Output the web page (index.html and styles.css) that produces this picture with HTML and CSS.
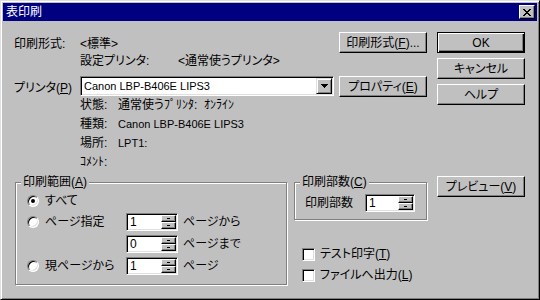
FILE: index.html
```html
<!DOCTYPE html>
<html lang="ja">
<head>
<meta charset="utf-8">
<title>表印刷</title>
<link rel="stylesheet" href="styles.css">
</head>
<body>
<div class="window">
  <div class="titlebar">
    <span class="title">表印刷</span>
    <span class="close">
      <svg width="8" height="7" viewBox="0 0 8 7" shape-rendering="crispEdges">
        <path fill="#000" d="M0 0h2v1H0zM6 0h2v1H6zM1 1h2v1H1zM5 1h2v1H5zM2 2h4v1H2zM3 3h2v1H3zM2 4h4v1H2zM1 5h2v1H1zM5 5h2v1H5zM0 6h2v1H0zM6 6h2v1H6z"/>
      </svg>
    </span>
  </div>
  <div class="client">
    <div class="main">
      <div class="top">
        <div class="lbl">印刷形式:</div>
        <div class="val">&lt;標準&gt;</div>
        <button class="btn">印刷形式(<u>F</u>)...</button>

        <div></div>
        <div class="setrow"><span class="setlbl">設定プリンタ:</span><span>&lt;通常使うプリンタ&gt;</span></div>

        <div class="lbl">プリンタ(<u>P</u>)</div>
        <div class="combo">
          <span class="combotext en">Canon LBP-B406E LIPS3</span>
          <span class="arrow">
            <svg width="7" height="4" viewBox="0 0 7 4" shape-rendering="crispEdges"><path fill="#000" d="M0 0h7v1H0zM1 1h5v1H1zM2 2h3v1H2zM3 3h1v1H3z"/></svg>
          </span>
        </div>
        <button class="btn">プロパティ(<u>E</u>)</button>
      </div>

      <div class="info">
        <div>状態:</div><div>通常使うﾌﾟﾘﾝﾀ:&nbsp; ｵﾝﾗｲﾝ</div>
        <div>種類:</div><div class="en">Canon LBP-B406E LIPS3</div>
        <div>場所:</div><div class="en">LPT1:</div>
        <div>ｺﾒﾝﾄ:</div><div></div>
      </div>

      <div class="bottom">
        <div class="group g1">
          <span class="legend">印刷範囲(<u>A</u>)</span>
          <div class="range">
            <div class="opt"><span class="radio on"></span>すべて</div>
            <div></div><div></div>

            <div class="opt"><span class="radio"></span>ページ指定</div>
            <div class="spin"><span class="num">1</span><span class="ud"><span class="up"><i></i></span><span class="dn"><i></i></span></span></div>
            <div class="after">ページから</div>

            <div></div>
            <div class="spin"><span class="num">0</span><span class="ud"><span class="up"><i></i></span><span class="dn"><i></i></span></span></div>
            <div class="after">ページまで</div>

            <div class="opt"><span class="radio"></span>現ページから</div>
            <div class="spin"><span class="num">1</span><span class="ud"><span class="up"><i></i></span><span class="dn"><i></i></span></span></div>
            <div class="after">ページ</div>
          </div>
        </div>

        <div class="g2col">
          <div class="group g2">
            <span class="legend">印刷部数(<u>C</u>)</span>
            <span class="copylbl">印刷部数</span>
            <div class="spin w50"><span class="num">1</span><span class="ud"><span class="up"><i></i></span><span class="dn"><i></i></span></span></div>
          </div>
          <div class="checks">
            <div class="check"><span class="box"></span>テスト印字(<u>T</u>)</div>
            <div class="check"><span class="box"></span>ファイルへ出力(<u>L</u>)</div>
          </div>
        </div>
      </div>
    </div>

    <div class="side">
      <button class="btn default">OK</button>
      <button class="btn">キャンセル</button>
      <button class="btn">ヘルプ</button>
      <button class="btn preview">プレビュー(<u>V</u>)</button>
    </div>
  </div>
</div>
</body>
</html>
```

FILE: styles.css
```css
* { box-sizing: border-box; }
html, body { margin: 0; padding: 0; }
body {
  width: 540px;
  height: 300px;
  overflow: hidden;
  background: #c0c0c0;
  color: #000;
  font-family: "Liberation Sans", "Noto Sans CJK JP", sans-serif;
  font-size: 12px;
  font-feature-settings: "palt" 1;
  white-space: nowrap;
}
u { text-underline-offset: 1px; }
.en { font-size: 11px; }

.window {
  width: 540px;
  height: 300px;
  background: #c0c0c0;
  border: 1px solid;
  border-color: #dfdfdf #000 #000 #dfdfdf;
  box-shadow: inset 1px 1px #fff, inset -1px -1px #808080;
  padding: 2px;
  display: flex;
  flex-direction: column;
}

.titlebar {
  height: 18px;
  background: #000080;
  color: #fff;
  display: flex;
  align-items: center;
  justify-content: space-between;
  padding: 0 2px 0 3px;
}
.title { line-height: 18px; }
.close {
  width: 16px;
  height: 14px;
  background: #c0c0c0;
  border: 1px solid;
  border-color: #fff #000 #000 #fff;
  box-shadow: inset -1px -1px #808080;
  display: flex;
  align-items: center;
  justify-content: center;
}
.close svg { display: block; }

.client {
  display: flex;
  padding: 11px 0 0 11px;
}
.main { width: 413px; }
.side {
  width: 88px;
  margin-left: 10px;
  display: flex;
  flex-direction: column;
  gap: 5px;
}
.side .preview { margin-top: 66px; }

.btn {
  width: 88px;
  height: 21px;
  margin: 0;
  padding: 0;
  font: inherit;
  font-feature-settings: "palt" 1;
  color: #000;
  background: #c0c0c0;
  border: 1px solid;
  border-color: #fff #000 #000 #fff;
  box-shadow: inset -1px -1px #808080;
  display: flex;
  align-items: center;
  justify-content: center;
  line-height: 14px;
}
.btn.default {
  border-color: #000;
  box-shadow: inset 1px 1px #fff, inset -1px -1px #000, inset -2px -2px #808080;
}

.top {
  display: grid;
  grid-template-columns: 61px 254px 88px;
  grid-template-rows: 21px 23px 21px;
  column-gap: 5px;
  align-items: center;
}
.setrow {
  grid-column: 2 / 4;
  align-self: start;
  display: flex;
  line-height: 16px;
}
.setlbl { width: 98px; }

.combo {
  align-self: start;
  height: 20px;
  background: #fff;
  border: 1px solid;
  border-color: #808080 #fff #fff #808080;
  box-shadow: inset 1px 1px #000, inset -1px -1px #dfdfdf;
  padding: 1px 1px 1px 3px;
  display: flex;
  align-items: center;
}
.combotext { line-height: 16px; }
.arrow {
  margin-left: auto;
  width: 16px;
  height: 16px;
  background: #c0c0c0;
  border: 1px solid;
  border-color: #dfdfdf #000 #000 #dfdfdf;
  box-shadow: inset 1px 1px #fff, inset -1px -1px #808080;
  display: flex;
  align-items: center;
  justify-content: center;
}
.arrow svg { display: block; }

.info {
  margin: -1px 0 0 66px;
  display: grid;
  grid-template-columns: 38px auto;
  grid-auto-rows: 19px;
  line-height: 19px;
}

.bottom {
  display: flex;
  margin-top: 10px;
}
.group {
  position: relative;
  border: 1px solid #808080;
  box-shadow: inset 1px 1px #fff, 1px 1px #fff;
}
.legend {
  position: absolute;
  top: -8px;
  left: 5px;
  padding: 0 2px;
  background: #c0c0c0;
  line-height: 14px;
}
.g1 {
  margin-left: 1px;
  width: 272px;
  height: 103px;
  padding: 10px 0 0 11px;
}
.range {
  display: grid;
  grid-template-columns: 99px 52px auto;
  grid-template-rows: 16px 18px 18px 18px;
  row-gap: 4px;
  align-items: center;
}
.opt {
  display: flex;
  align-items: center;
  line-height: 16px;
}
.after { margin-left: 5px; line-height: 18px; }

.radio {
  width: 12px;
  height: 12px;
  margin-right: 6px;
  border-radius: 50%;
  background: #fff;
  border: 1px solid;
  border-color: #808080 #fff #fff #808080;
  box-shadow: inset 1px 1px #000, inset -1px -1px #dfdfdf;
  display: grid;
  place-items: center;
}
.radio.on::after {
  content: "";
  width: 4px;
  height: 4px;
  border-radius: 50%;
  background: #000;
}

.spin {
  width: 52px;
  height: 18px;
  background: #fff;
  border: 1px solid;
  border-color: #808080 #fff #fff #808080;
  box-shadow: inset 1px 1px #000, inset -1px -1px #dfdfdf;
  padding: 1px 1px 1px 2px;
  display: flex;
}
.spin.w50 { width: 50px; }
.num { flex: 1; line-height: 14px; padding-left: 1px; }
.ud {
  width: 15px;
  display: flex;
  flex-direction: column;
}
.ud > span {
  flex: 1;
  background: #c0c0c0;
  border: 1px solid;
  border-color: #fff #000 #000 #fff;
  box-shadow: inset -1px -1px #808080;
  display: flex;
  align-items: center;
  justify-content: center;
}
.ud i {
  display: block;
  width: 3px;
  height: 1px;
  background: #000;
}

.g2col {
  margin-left: 7px;
  width: 133px;
}
.g2 {
  height: 38px;
  padding: 11px 0 0 10px;
  display: flex;
  align-items: flex-start;
}
.copylbl { width: 60px; line-height: 18px; }

.checks {
  margin: 28px 0 0 8px;
  display: flex;
  flex-direction: column;
  gap: 8px;
}
.check {
  display: flex;
  align-items: center;
  height: 13px;
  line-height: 13px;
}
.box {
  width: 13px;
  height: 13px;
  margin-right: 5px;
  background: #fff;
  border: 1px solid;
  border-color: #808080 #fff #fff #808080;
  box-shadow: inset 1px 1px #000, inset -1px -1px #dfdfdf;
}
```
